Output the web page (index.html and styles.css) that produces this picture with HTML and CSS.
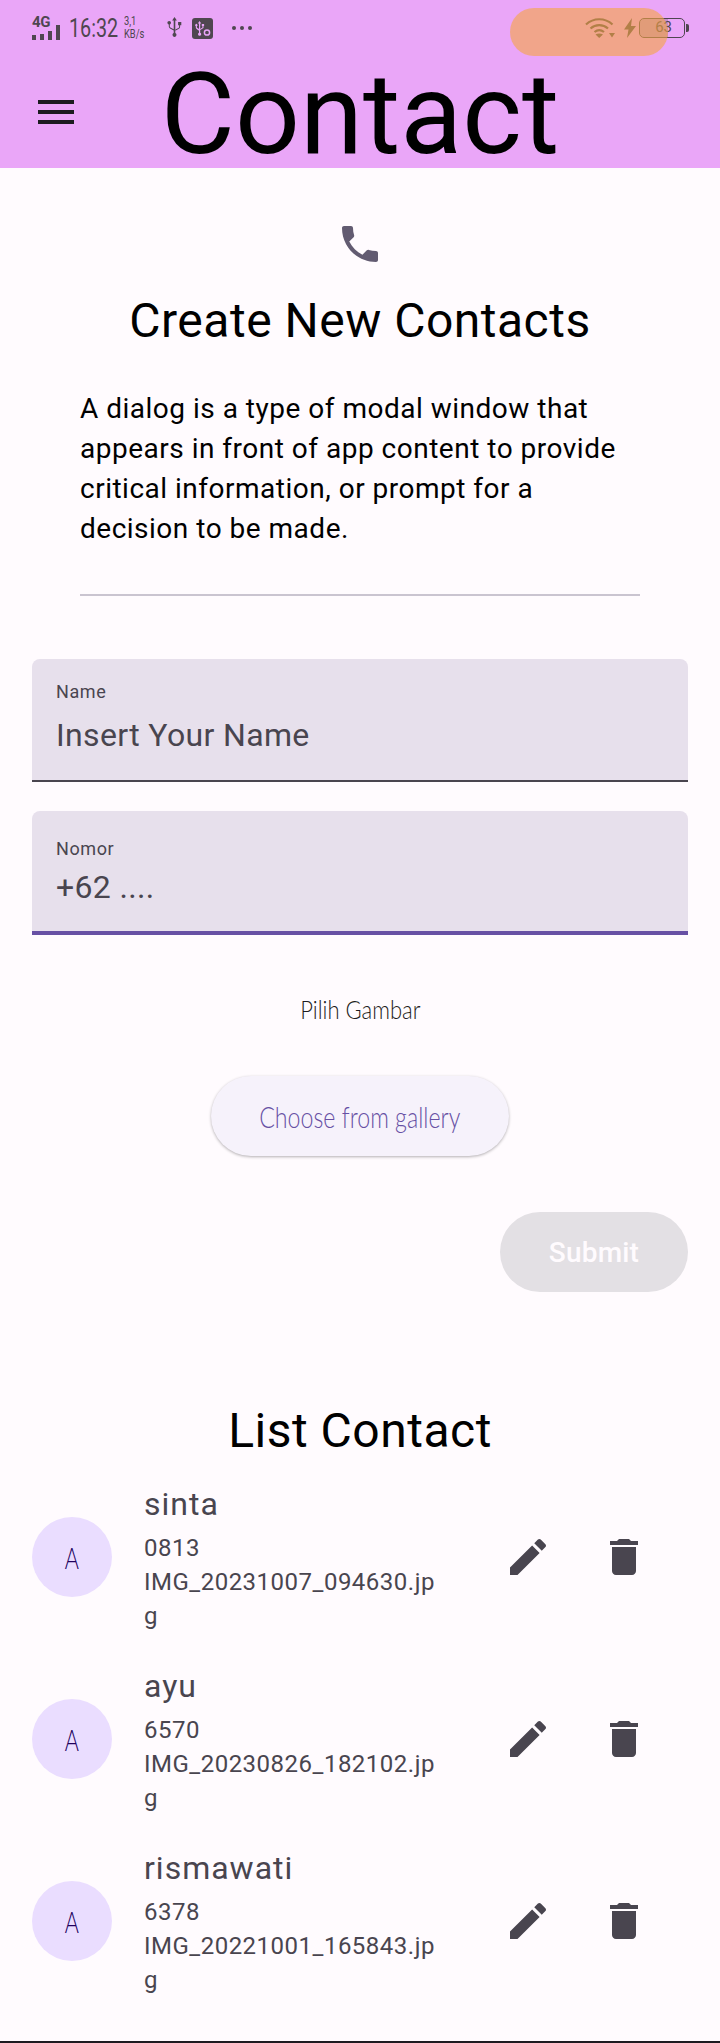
FILE: index.html
```html
<!DOCTYPE html>
<html lang="id">
<head>
  <meta charset="UTF-8" />
  <title>Contact</title>
  <link rel="stylesheet" href="styles.css">
</head>
<body>

<div class="app">
  <header class="appbar">
    <div class="statusbar">
      <div class="status-left">
        <div class="net">
          <span class="net-label">4G</span>
          <div class="bars"><i class="b1"></i><i class="b2"></i><i class="b3"></i><i class="b4"></i></div>
        </div>
        <span class="clock">16:32</span>
        <div class="speed"><span>3,1</span><span>KB/s</span></div>
        <svg class="usb" viewBox="0 0 15 22" width="15" height="22">
          <path d="M7.5 0l2.4 3.6H8.3V16a1.9 1.9 0 0 1 1.2 1.8c0 1.2-.9 2.2-2 2.2s-2-1-2-2.2c0-.8.5-1.500 1.200-1.800v-2.500L3 11.500c-.8-.5-1.200-1.200-1.200-2V7.600C1 7.300.4 6.600.4 5.800c0-1 .8-1.800 1.800-1.800S4 4.800 4 5.800c0 .8-.5 1.500-1.200 1.800v1.900c0 .4.200.8.600 1l3.300 1.800V3.600H5.100z" fill="#4f4650"/>
          <path d="M8.300 12.600l3.200-1.700c.4-.2.600-.6.600-1V8.200h-1V5h3.200v3.200h-1.200v1.700c0 .8-.4 1.500-1.100 1.900l-3.700 2z" fill="#4f4650"/>
        </svg>
        <svg class="usb-box" viewBox="0 0 21 21" width="21" height="21">
          <rect width="21" height="21" rx="3" fill="#4f4650"/>
          <path d="M7.500 3l1.800 2.600H8.200v9.200c.6.200 1 .8 1 1.400 0 .8-.7 1.500-1.600 1.500S6 17 6 16.200c0-.6.400-1.200 1-1.400v-2L4.600 11c-.5-.3-.8-.8-.8-1.400V8.200a1.200 1.200 0 1 1 1.100 0v1.400l2.100 1.400V5.600H5.800zM8.200 11l2.200-1.400V8.100h-.6V6h2.300v2.100h-.6v2l-3.300 2z" fill="#e9a4f8"/>
          <circle cx="15" cy="14.500" r="2.600" fill="none" stroke="#e9a4f8" stroke-width="1.500"/>
        </svg>
        <div class="dots"><i></i><i></i><i></i></div>
      </div>
      <div class="status-right">
        <svg class="wifi" viewBox="0 0 30 20" width="30" height="20">
          <path d="M1 6.500C8.500-.5 20-.5 27.500 6.500M5.500 10.500c5-4.500 12.500-4.500 17.500 0M9.500 14c3-2.500 6.500-2.500 9.500 0" fill="none" stroke="#4f4650" stroke-width="2.200"/>
          <path d="M10.500 16.500c2.300-1.500 5.200-1.500 7.500 0L14.200 20zM24 15h6l-3 4.500z" fill="#4f4650"/>
        </svg>
        <svg class="bolt" viewBox="0 0 12 20" width="12" height="20">
          <path d="M8 0L0 11.500h4.500L3 20l9-12H7z" fill="#4f4650"/>
        </svg>
        <div class="battery">
          <div class="battery-fill"></div>
          <span class="battery-num">63</span>
        </div>
        <div class="battery-tip"></div>
      </div>
    </div>
    <div class="pill"></div>

    <div class="toolbar">
      <svg class="menu-icon" viewBox="0 0 24 24" width="48" height="48">
        <path d="M3 18h18v-2H3v2zm0-5h18v-2H3v2zm0-5h18V6H3v2z" fill="#1d1b20"/>
      </svg>
      <h1>Contact</h1>
    </div>
  </header>

  <main class="content">
    <section class="intro">
      <svg class="phone-icon" viewBox="0 0 24 24" width="48" height="48">
        <path d="M6.620 10.790c1.440 2.830 3.760 5.140 6.590 6.590l2.200-2.200c.27-.27.67-.36 1.020-.24 1.120.37 2.330.57 3.570.57.55 0 1 .45 1 1V20c0 .55-.45 1-1 1-9.390 0-17-7.610-17-17 0-.55.45-1 1-1h3.500c.55 0 1 .45 1 1 0 1.250.2 2.450.57 3.570.11.35.03.74-.25 1.020l-2.200 2.200z" fill="#625b71"/>
      </svg>
      <h2 class="heading">Create New Contacts</h2>
      <p class="desc">A dialog is a type of modal window that appears in front of app content to provide critical information, or prompt for a decision to be made.</p>
      <hr class="divider">
    </section>

    <form class="form">
      <label class="field">
        <span class="field-label">Name</span>
        <span class="field-hint">Insert Your Name</span>
      </label>
      <label class="field field-focus">
        <span class="field-label">Nomor</span>
        <span class="field-hint">+62 ....</span>
      </label>

      <div class="picker">
        <span class="picker-label">Pilih Gambar</span>
        <button type="button" class="gallery-btn"><span>Choose from gallery</span></button>
      </div>

      <div class="form-actions">
        <button type="button" class="submit-btn" disabled>Submit</button>
      </div>
    </form>

    <section class="list">
      <h2 class="heading">List Contact</h2>

      <div class="row">
        <div class="avatar"><span>A</span></div>
        <div class="info">
          <div class="name">sinta</div>
          <div class="sub">0813</div>
          <div class="sub">IMG_20231007_094630.jpg</div>
        </div>
        <div class="actions">
          <svg viewBox="0 0 24 24" width="48" height="48"><path d="M3 17.250V21h3.750L17.810 9.940l-3.750-3.750L3 17.250zM20.710 7.040c.39-.39.39-1.020 0-1.410l-2.340-2.340c-.39-.39-1.020-.39-1.410 0l-1.830 1.830 3.750 3.750 1.830-1.830z"/></svg>
          <svg viewBox="0 0 24 24" width="48" height="48"><path d="M6 19c0 1.100.9 2 2 2h8c1.100 0 2-.9 2-2V7H6v12zM19 4h-3.500l-1-1h-5l-1 1H5v2h14V4z"/></svg>
        </div>
      </div>

      <div class="row">
        <div class="avatar"><span>A</span></div>
        <div class="info">
          <div class="name">ayu</div>
          <div class="sub">6570</div>
          <div class="sub">IMG_20230826_182102.jpg</div>
        </div>
        <div class="actions">
          <svg viewBox="0 0 24 24" width="48" height="48"><path d="M3 17.250V21h3.750L17.810 9.940l-3.750-3.750L3 17.250zM20.710 7.040c.39-.39.39-1.020 0-1.410l-2.340-2.340c-.39-.39-1.020-.39-1.410 0l-1.830 1.830 3.750 3.750 1.830-1.830z"/></svg>
          <svg viewBox="0 0 24 24" width="48" height="48"><path d="M6 19c0 1.100.9 2 2 2h8c1.100 0 2-.9 2-2V7H6v12zM19 4h-3.500l-1-1h-5l-1 1H5v2h14V4z"/></svg>
        </div>
      </div>

      <div class="row">
        <div class="avatar"><span>A</span></div>
        <div class="info">
          <div class="name">rismawati</div>
          <div class="sub">6378</div>
          <div class="sub">IMG_20221001_165843.jpg</div>
        </div>
        <div class="actions">
          <svg viewBox="0 0 24 24" width="48" height="48"><path d="M3 17.250V21h3.750L17.810 9.940l-3.750-3.750L3 17.250zM20.710 7.040c.39-.39.39-1.020 0-1.410l-2.340-2.340c-.39-.39-1.020-.39-1.410 0l-1.830 1.830 3.750 3.750 1.830-1.830z"/></svg>
          <svg viewBox="0 0 24 24" width="48" height="48"><path d="M6 19c0 1.100.9 2 2 2h8c1.100 0 2-.9 2-2V7H6v12zM19 4h-3.500l-1-1h-5l-1 1H5v2h14V4z"/></svg>
        </div>
      </div>
    </section>
  </main>
</div>

</body>
</html>
```

FILE: styles.css
```css
* {
  box-sizing: border-box;
}
html, body {
  margin: 0;
  padding: 0;
}
body {
  font-family: Roboto, "Liberation Sans", sans-serif;
  background: #fffbfe;
  color: #000;
}
svg {
  display: block;
}
.app {
  height: 2043px;
  overflow: hidden;
  border-bottom: 2px solid #1d1b20;
}

/* top bar */
.appbar {
  position: relative;
  height: 168px;
  background: #eaa6f8;
}
.statusbar {
  display: flex;
  justify-content: space-between;
  align-items: center;
  height: 56px;
  padding: 0 31px 0 32px;
}
.status-left, .status-right {
  display: flex;
  align-items: center;
}
.net {
  display: flex;
  flex-direction: column;
  width: 28px;
}
.net-label {
  font-size: 15px;
  font-weight: 700;
  line-height: 11px;
  letter-spacing: -.3px;
  color: #4f4650;
}
.bars {
  display: flex;
  align-items: flex-end;
  gap: 4px;
  height: 12px;
}
.bars i {
  display: block;
  flex: none;
  width: 4px;
  background: #4f4650;
}
.b1 { height: 5px; }
.b2 { height: 6px; }
.b3 { height: 9px; }
.b4 { height: 15px; }
.clock {
  width: 46px;
  margin-left: 9px;
  font-size: 25px;
  white-space: nowrap;
  transform: scaleX(.79);
  transform-origin: left center;
  color: #4f4650;
}
.speed {
  display: flex;
  flex-direction: column;
  width: 18px;
  margin-left: 9px;
  font-size: 12px;
  line-height: 13px;
  white-space: nowrap;
  transform: scaleX(.78);
  transform-origin: left center;
  color: #4f4650;
}
.usb {
  margin-left: 25px;
}
.usb-box {
  margin-left: 10px;
}
.dots {
  display: flex;
  gap: 4px;
  margin-left: 19px;
}
.dots i {
  display: block;
  width: 4px;
  height: 4px;
  border-radius: 50%;
  background: #4f4650;
}
.bolt {
  margin-left: 9px;
}
.battery {
  position: relative;
  width: 46px;
  height: 20px;
  margin-left: 3px;
  border: 1.5px solid #4f4650;
  border-radius: 5px;
  overflow: hidden;
}
.battery-fill {
  width: 28px;
  height: 100%;
  background: #4f4650;
  opacity: .25;
}
.battery-num {
  position: absolute;
  right: 12px;
  top: 0;
  font-size: 15px;
  line-height: 17px;
  color: #4f4650;
}
.battery-tip {
  width: 3px;
  height: 8px;
  margin-left: 1px;
  border-radius: 0 2px 2px 0;
  background: #4f4650;
}
.pill {
  position: absolute;
  left: 510px;
  top: 8px;
  width: 158px;
  height: 48px;
  border-radius: 24px;
  background: rgba(245, 165, 65, .6);
}
.toolbar {
  display: grid;
  grid-template-columns: 1fr auto 1fr;
  align-items: center;
  height: 112px;
}
.menu-icon {
  margin-left: 32px;
}
.toolbar h1 {
  height: 112px;
  margin: 0;
  font-size: 114px;
  font-weight: 400;
  line-height: 116px;
  color: #000;
}

/* intro */
.intro {
  display: flex;
  flex-direction: column;
  align-items: center;
  padding-top: 52px;
}
.heading {
  margin: 0;
  font-size: 48px;
  font-weight: 400;
  line-height: 52px;
  letter-spacing: .5px;
  text-align: center;
}
.intro .heading {
  margin-top: 27px;
}
.desc {
  width: 560px;
  margin: 42px 0 0;
  font-size: 28px;
  line-height: 40px;
  letter-spacing: .5px;
}
.divider {
  width: 560px;
  height: 2px;
  margin: 45px 0 0;
  border: 0;
  background: #cac4d0;
}

/* form */
.form {
  padding: 63px 32px 0;
}
.field {
  display: flex;
  flex-direction: column;
  height: 123px;
  margin-bottom: 29px;
  padding: 21px 24px 0;
  background: #e7e0ec;
  border-radius: 8px 8px 0 0;
  border-bottom: 2px solid #49454f;
}
.field-label {
  font-size: 18px;
  line-height: 24px;
  letter-spacing: .6px;
  color: #49454f;
}
.field-hint {
  margin-top: 7px;
  font-size: 32px;
  line-height: 48px;
  letter-spacing: .35px;
  color: #49454f;
}
.field-focus {
  height: 124px;
  margin-bottom: 28px;
  padding-top: 26px;
  border-bottom: 4px solid #6750a4;
}
.field-focus .field-hint {
  margin-top: 2px;
}
.picker {
  display: flex;
  flex-direction: column;
  align-items: center;
}
.picker-label {
  margin-top: 30px;
  font-family: Lato, sans-serif;
  font-size: 25px;
  font-weight: 300;
  line-height: 32px;
  transform: scaleX(.88);
  color: #1d1b20;
}
.gallery-btn {
  width: 298px;
  height: 80px;
  margin-top: 51px;
  border: none;
  border-radius: 40px;
  background: #f6f2fb;
  box-shadow: 0 1px 3px rgba(0, 0, 0, .3);
  color: #6750a4;
  font-family: Lato, sans-serif;
  font-size: 29px;
  font-weight: 300;
}
.gallery-btn span {
  display: inline-block;
  white-space: nowrap;
  transform: scaleX(.8);
}
.form-actions {
  display: flex;
  justify-content: flex-end;
  margin-top: 56px;
}
.submit-btn {
  width: 188px;
  height: 80px;
  border: none;
  border-radius: 40px;
  background: #e3e0e4;
  color: #fffbfe;
  font-family: Roboto, sans-serif;
  font-size: 28px;
  font-weight: 500;
  letter-spacing: .2px;
}

/* list */
.list {
  padding-top: 113px;
}
.row {
  display: flex;
  align-items: center;
  height: 182px;
  padding-left: 32px;
}
.list .heading {
  margin-bottom: 9px;
}
.avatar {
  display: flex;
  align-items: center;
  justify-content: center;
  flex: none;
  width: 80px;
  height: 80px;
  border-radius: 50%;
  background: #eaddff;
  color: #21005d;
  font-family: Lato, sans-serif;
  font-size: 30px;
  font-weight: 300;
}
.avatar span {
  display: block;
  transform: scaleX(.72);
}
.info {
  flex: none;
  width: 295px;
  margin-left: 32px;
  padding-top: 1px;
  overflow-wrap: anywhere;
  color: #49454f;
}
.name {
  margin-bottom: 5px;
  font-size: 32px;
  line-height: 44px;
  letter-spacing: 1px;
}
.sub {
  font-size: 24px;
  line-height: 34px;
  letter-spacing: .5px;
}
.actions {
  display: flex;
  gap: 48px;
  margin-left: 65px;
  fill: #49454f;
}
```
